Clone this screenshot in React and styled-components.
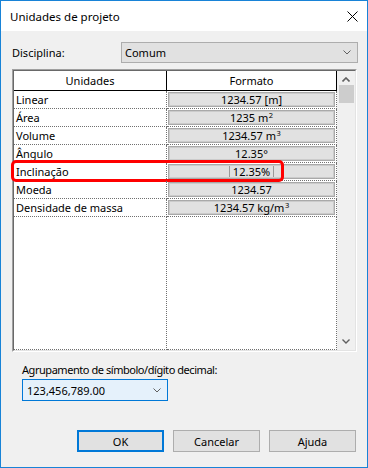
import React from 'react'
import styled, { createGlobalStyle } from 'styled-components'

const GlobalStyle = createGlobalStyle`
  html, body {
    margin: 0;
    padding: 0;
    background: #fff;
  }
  body {
    font-family: "Noto Sans", "Segoe UI", sans-serif;
    font-size: 11px;
    color: #000;
  }
  * { box-sizing: border-box; }
`;

const Window = styled.div`
  width: 368px;
  height: 468px;
  display: flex;
  flex-direction: column;
  background: #f0f0f0;
  border: 1px solid #1883d7;
`;

const TitleBar = styled.div`
  height: 30px;
  display: flex;
  align-items: center;
  justify-content: space-between;
  padding: 0 9px;
  background: #fff;
  font-size: 11.5px;
`;

const Body = styled.div`
  flex: 1;
  display: flex;
  flex-direction: column;
  padding: 11px 9px 0 11px;
`;

const FieldRow = styled.div`
  display: grid;
  grid-template-columns: 109px 1fr;
  align-items: center;
`;

const Combo = styled.div`
  width: ${p => p.$width || 'auto'};
  height: ${p => p.$height || 21}px;
  display: flex;
  align-items: center;
  justify-content: space-between;
  padding: 0 ${p => p.$padRight || 6}px 0 ${p => p.$padLeft || 3}px;
  background: ${p => (p.$focused ? '#e5f1fb' : '#e1e1e1')};
  border: 1px solid ${p => (p.$focused ? '#0078d7' : '#adadad')};
`;

const Frame = styled.div`
  width: 345px;
  height: 283px;
  margin-top: 6px;
  display: flex;
  border: 1px solid;
  border-color: #a0a0a0 #fff #fff #a0a0a0;
`;

const FrameInner = styled.div`
  flex: 1;
  display: flex;
  border: 1px solid;
  border-color: #696969 #e3e3e3 #e3e3e3 #696969;
`;

const Grid = styled.div`
  width: 323px;
  display: flex;
  flex-direction: column;
  background: #fff;
`;

const Columns = styled.div`
  display: grid;
  grid-template-columns: 153px 170px;
  position: relative;
  height: ${p => (p.$fill ? 'auto' : `${p.$height}px`)};
  flex: ${p => (p.$fill ? 1 : 'none')};
`;

const HeaderCell = styled.div`
  display: flex;
  align-items: center;
  justify-content: center;
  border-right: 1px solid #000;
  border-bottom: 1px solid #000;
`;

const Cell = styled.div`
  display: flex;
  align-items: center;
  padding: ${p => (p.$label ? '0 0 0 2px' : '1px')};
  border-right: 1px dotted #707070;
  border-bottom: 1px dotted #707070;
`;

const ValueBox = styled.div`
  flex: 1;
  height: 15px;
  display: flex;
  align-items: center;
  justify-content: center;
  background: #e1e1e1;
  border: 1px solid #a9a9a9;
  box-shadow: inset 0 0 0 1px #cbcbcb;
  white-space: nowrap;
`;

const Sup = styled.span`
  font-size: 7.5px;
  position: relative;
  top: -4px;
  margin-left: 0.5px;
`;

const Caret = styled.span`
  padding: 0 3px;
  line-height: 11px;
  border-left: 1px solid #9a9a9a;
  border-right: 1px solid #9a9a9a;
`;

const Highlight = styled.div`
  position: absolute;
  top: -3px;
  left: -3px;
  width: 273px;
  height: 22px;
  border: 3px solid #ff0000;
  border-radius: 5px;
  pointer-events: none;
`;

const Scrollbar = styled.div`
  width: 18px;
  display: flex;
  flex-direction: column;
  background: #f0f0f0;
`;

const ScrollArrow = styled.div`
  height: ${p => p.$height}px;
  display: flex;
  align-items: center;
  justify-content: center;
  padding-top: ${p => p.$shift || 0}px;
`;

const Thumb = styled.div`
  width: 15px;
  height: 18px;
  margin-left: 2px;
  background: #cdcdcd;
`;

const Section = styled.div`
  margin: 10px 0 0 10px;
  display: flex;
  flex-direction: column;
  gap: 1px;
`;

const Label = styled.div`
  line-height: 16px;
  letter-spacing: -0.45px;
`;

const Buttons = styled.div`
  margin: 29px 2px 0 0;
  display: flex;
  justify-content: flex-end;
  gap: 9px;
`;

const Button = styled.div`
  width: 87px;
  height: 22px;
  display: flex;
  align-items: center;
  justify-content: center;
  background: #e1e1e1;
  border: ${p => (p.$default ? '2px solid #0078d7' : '1px solid #adadad')};
`;

const Chevron = ({ up, color = '#606060', weight = 1 }) => (
  <svg width="8" height="5" viewBox="0 0 8 5">
    <polyline
      points={up ? '0.5,4.5 4,1 7.5,4.5' : '0.5,0.5 4,4 7.5,0.5'}
      fill="none"
      stroke={color}
      strokeWidth={weight}
    />
  </svg>
);

const CloseIcon = () => (
  <svg width="11" height="11" viewBox="0 0 11 11">
    <path d="M0.5 0.5 L10.5 10.5 M10.5 0.5 L0.5 10.5" stroke="#000" strokeWidth="1" />
  </svg>
);

const units = [
  { name: 'Linear', value: '1234.57 [m]' },
  { name: 'Área', value: '1235 m', sup: '2' },
  { name: 'Volume', value: '1234.57 m', sup: '3' },
  { name: 'Ângulo', value: '12.35°' },
  { name: 'Inclinação', value: '12.35%', editing: true },
  { name: 'Moeda', value: '1234.57' },
  { name: 'Densidade de massa', value: '1234.57 kg/m', sup: '3' },
];

export default function App() {
  return (
    <>
      <GlobalStyle />
      <Window>
        <TitleBar>
          <span>Unidades de projeto</span>
          <CloseIcon />
        </TitleBar>
        <Body>
          <FieldRow>
            <span>Disciplina:</span>
            <Combo>
              <span>Comum</span>
              <Chevron />
            </Combo>
          </FieldRow>

          <Frame>
            <FrameInner>
              <Grid>
                <Columns $height={20}>
                  <HeaderCell>Unidades</HeaderCell>
                  <HeaderCell>Formato</HeaderCell>
                </Columns>
                {units.map(u => (
                  <Columns key={u.name} $height={18}>
                    <Cell $label>{u.name}</Cell>
                    <Cell>
                      <ValueBox>
                        {u.editing ? (
                          <Caret>{u.value}</Caret>
                        ) : (
                          <span>
                            {u.value}
                            {u.sup && <Sup>{u.sup}</Sup>}
                          </span>
                        )}
                      </ValueBox>
                    </Cell>
                    {u.editing && <Highlight />}
                  </Columns>
                ))}
                <Columns $fill>
                  <Cell $label />
                  <Cell />
                </Columns>
              </Grid>
              <Scrollbar>
                <ScrollArrow $height={14} $shift={3}>
                  <Chevron up weight={1.6} />
                </ScrollArrow>
                <Thumb />
                <div style={{ flex: 1 }} />
                <ScrollArrow $height={17}>
                  <Chevron weight={1.4} />
                </ScrollArrow>
              </Scrollbar>
            </FrameInner>
          </Frame>

          <Section>
            <Label>Agrupamento de símbolo/dígito decimal:</Label>
            <Combo $focused $width="146px" $height={22} $padLeft={4} $padRight={6}>
              <span>123,456,789.00</span>
              <Chevron />
            </Combo>
          </Section>

          <Buttons>
            <Button $default>OK</Button>
            <Button>Cancelar</Button>
            <Button>Ajuda</Button>
          </Buttons>
        </Body>
      </Window>
    </>
  );
}
